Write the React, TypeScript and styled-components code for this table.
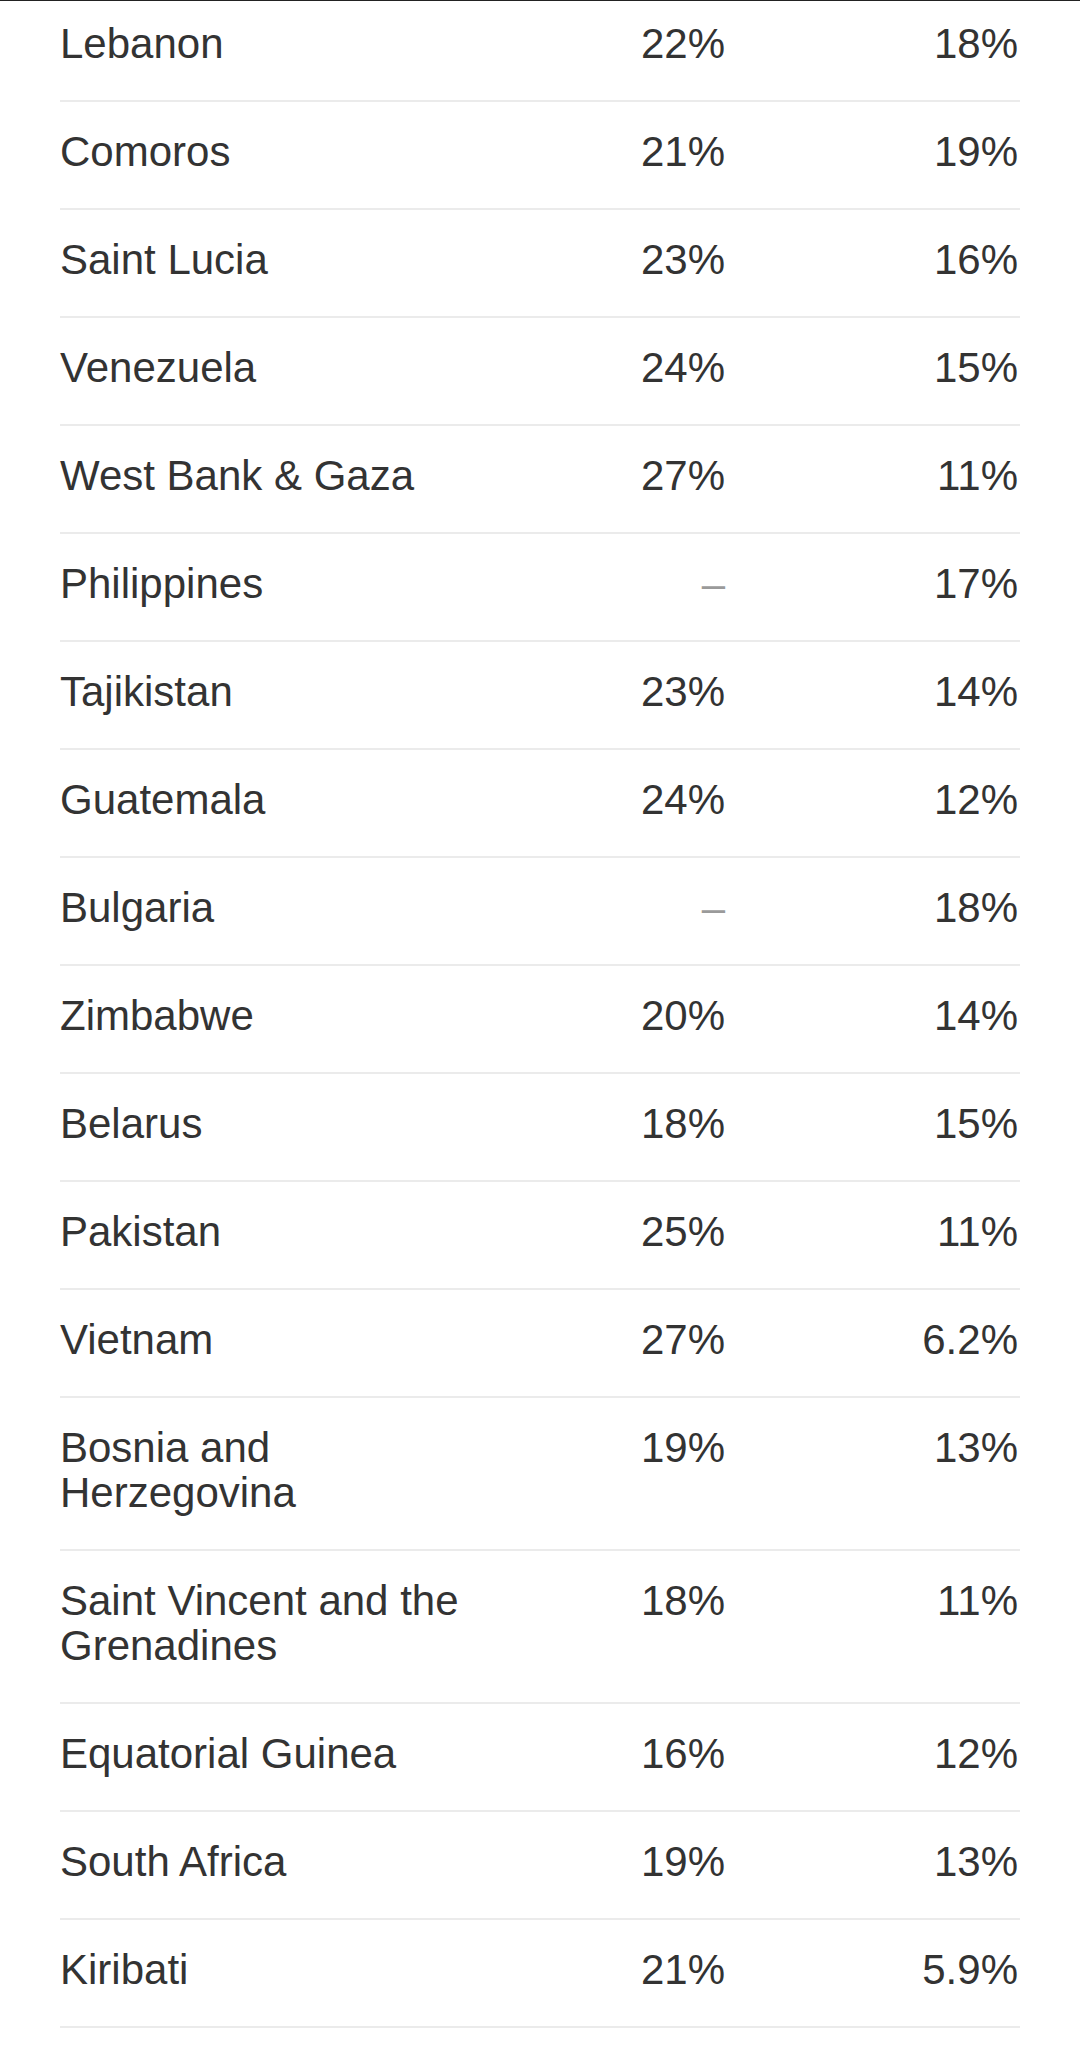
import React from 'react';
import styled, { createGlobalStyle } from 'styled-components';

const GlobalStyle = createGlobalStyle`
  html, body { margin: 0; padding: 0; background: #fff; }
  body { font-family: "Liberation Sans", Arial, sans-serif; color: #333; }
`;

// --- Styled Components ---
const Page = styled.div`
  width: 1080px;
  min-height: 2047px;
  background: #fff;
`;

const TopRule = styled.div`
  height: 1px;
  background: #222;
`;

const Viewport = styled.div`
  overflow: hidden;
  padding: 0 60px;
`;

const Table = styled.div`
  margin-top: -7px;
`;

const Row = styled.div`
  display: grid;
  grid-template-columns: 440px 225px 293px;
  padding: 27px 0 34px;
  border-bottom: 2px solid #ebebeb;
  font-size: 42px;
  line-height: 45px;
  color: #333;
`;

const Name = styled.div`
  padding-right: 10px;
`;

const Value = styled.div<{ $empty?: boolean }>`
  text-align: right;
  color: ${p => (p.$empty ? '#9a9a9a' : '#333')};
`;

type Entry = [string, string | null, string];

const rows: Entry[] = [
  ['Lebanon', '22%', '18%'],
  ['Comoros', '21%', '19%'],
  ['Saint Lucia', '23%', '16%'],
  ['Venezuela', '24%', '15%'],
  ['West Bank & Gaza', '27%', '11%'],
  ['Philippines', null, '17%'],
  ['Tajikistan', '23%', '14%'],
  ['Guatemala', '24%', '12%'],
  ['Bulgaria', null, '18%'],
  ['Zimbabwe', '20%', '14%'],
  ['Belarus', '18%', '15%'],
  ['Pakistan', '25%', '11%'],
  ['Vietnam', '27%', '6.2%'],
  ['Bosnia and Herzegovina', '19%', '13%'],
  ['Saint Vincent and the Grenadines', '18%', '11%'],
  ['Equatorial Guinea', '16%', '12%'],
  ['South Africa', '19%', '13%'],
  ['Kiribati', '21%', '5.9%'],
];

const App: React.FC = () => {
  return (
    <>
      <GlobalStyle />
      <Page>
        <TopRule />
        <Viewport>
          <Table>
            {rows.map(([name, a, b]) => (
              <Row key={name}>
                <Name>{name}</Name>
                <Value $empty={a === null}>{a ?? '–'}</Value>
                <Value>{b}</Value>
              </Row>
            ))}
          </Table>
        </Viewport>
      </Page>
    </>
  );
};

export default App;
